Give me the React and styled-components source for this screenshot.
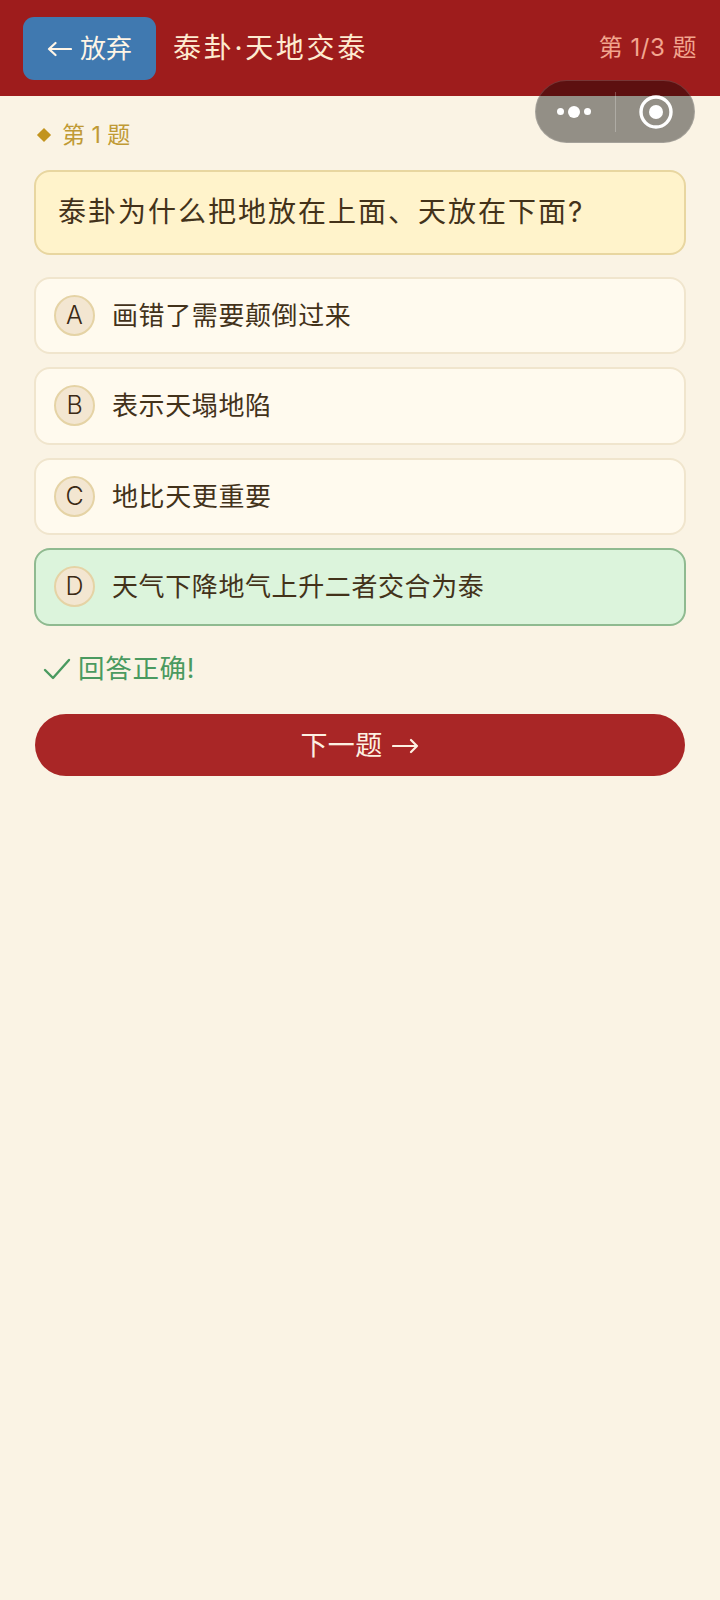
import React from "react";
import styled, { createGlobalStyle } from "styled-components";

const FONT = `Inter, "Noto Sans CJK SC", "Noto Sans", sans-serif`;
const Global = createGlobalStyle`
  html, body { margin: 0; padding: 0; background: #faf3e4; }
  body { font-family: ${FONT}; }
  * { box-sizing: border-box; }
`;
const Page = styled.div`position: relative; width: 720px; height: 1600px; background: #faf3e4; overflow: hidden;`;
const Header = styled.header`
  height: 96px; background: #9e1c1c; display: flex; align-items: center; padding: 0 23px 0 23px;
`;
const BackButton = styled.button`
  width: 133px; height: 63px; border: 0; border-radius: 11px; background: #4079b0;
  color: #fff5e6; display: flex; align-items: center; justify-content: center; gap: 8px;
  font: 400 26px/1 ${FONT}; padding: 2px 0 0;
`;
const Title = styled.h1`
  margin: 0 0 0 17px; flex: 1; color: #fdebd0; font-size: 28px; font-weight: 400; letter-spacing: 2.7px; line-height: 1;
`;
const Counter = styled.div`color: #f2a58f; font-size: 24px; font-weight: 400; white-space: pre; line-height: 1; letter-spacing: 0.5px;`;
const Content = styled.main`padding: 0 34px;`;
const Label = styled.div`
  height: 74px; display: flex; align-items: center; color: #c09a34; font-size: 23px; font-weight: 400; padding: 4px 0 0 5px; gap: 13px; white-space: pre; line-height: 1;
`;
const Diamond = styled.span`width: 10px; height: 10px; background: #c2941f; transform: rotate(45deg);`;
const Question = styled.div`
  height: 85px; background: #fff3cb; border: 2px solid #e8d6a0; border-radius: 16px; display: flex; align-items: center;
  padding: 0 22px 1px; font-size: 28px; font-weight: 400; color: #43321a; letter-spacing: 2px; line-height: 1;
`;
const Options = styled.div`margin-top: 21.5px; display: flex; flex-direction: column; gap: 13px;`;
const Option = styled.div`
  height: 77.5px; display: flex; align-items: center; gap: 17px; padding: 0 18px; border-radius: 16px;
  background: ${p => (p.$correct ? "#dcf4dc" : "#fffaee")};
  border: 2px solid ${p => (p.$correct ? "#8fba90" : "#f0e5cd")};
  font-size: 26px; font-weight: 400; color: #43321a; letter-spacing: 0.6px; line-height: 1;
`;
const OptionText = styled.span`display: block; padding-top: 1px;`;
const Badge = styled.span`
  width: 41px; height: 41px; flex: none; border-radius: 50%; background: #f3e6d1; border: 2px solid #e5d3a5;
  display: flex; align-items: center; justify-content: center; font-size: 25px; font-weight: 300; color: #3b2a15; letter-spacing: 0;
`;
const Status = styled.div`
  margin-top: 22px; height: 42px; display: flex; align-items: center; gap: 7px; padding-left: 9px; color: #4a9a60;
  font-size: 26.5px; font-weight: 400; letter-spacing: 0.7px; line-height: 1;
`;
const NextButton = styled.button`
  margin: 24px 0 0 1px; width: 650px; height: 62px; border: 0; border-radius: 31px; background: #a92626; color: #fdf0e2;
  display: flex; align-items: center; justify-content: center; gap: 10px; padding: 2px 0 0;
  font: 400 27px/1 ${FONT}; letter-spacing: 0.3px;
`;
const Capsule = styled.div`
  position: absolute; left: 535px; top: 80px; width: 160px; height: 63px; border-radius: 32px;
  background: rgba(0, 0, 0, 0.41); border: 1px solid rgba(255,255,255,0.16); display: flex; align-items: center;
`;
const CapsuleSide = styled.div`
  flex: 1; height: 100%; display: flex; align-items: center; justify-content: center; gap: 4px;
  padding: ${p => (p.$right ? "0 0 0 3px" : "0 3px 0 0")};
`;
const Divider = styled.div`width: 1px; height: 40px; background: rgba(255,255,255,0.25);`;
const Dot = styled.span`
  width: ${p => p.$size}px; height: ${p => p.$size}px; border-radius: 50%; background: #fff;
`;

const options = [
  ["A", "画错了需要颠倒过来"],
  ["B", "表示天塌地陷"],
  ["C", "地比天更重要"],
  ["D", "天气下降地气上升二者交合为泰", true],
];

export default function App() {
  return (
    <Page>
      <Global />
      <Header>
        <BackButton>
          <svg width="25" height="18" viewBox="0 0 25 18" fill="none" stroke="#fff5e6" strokeWidth="2.2" strokeLinecap="round" strokeLinejoin="round">
            <path d="M2 9h22M8.5 3L2 9l6.5 6" />
          </svg>
          放弃
        </BackButton>
        <Title>泰卦·天地交泰</Title>
        <Counter>第 1/3 题</Counter>
      </Header>
      <Content>
        <Label><Diamond />第 1 题</Label>
        <Question>泰卦为什么把地放在上面、天放在下面?</Question>
        <Options>
          {options.map(([k, t, c]) => (
            <Option key={k} $correct={c}><Badge>{k}</Badge><OptionText>{t}</OptionText></Option>
          ))}
        </Options>
        <Status>
          <svg width="28" height="24" viewBox="0 0 28 24" fill="none" stroke="#4a9a60" strokeWidth="2.4" strokeLinecap="round" strokeLinejoin="round">
            <path d="M2 13l8 8L26 3" />
          </svg>
          回答正确!
        </Status>
        <NextButton>
          下一题
          <svg width="27" height="18" viewBox="0 0 27 18" fill="none" stroke="#fdf0e2" strokeWidth="2.2" strokeLinecap="round" strokeLinejoin="round">
            <path d="M1 9h24M19 3l6 6-6 6" />
          </svg>
        </NextButton>
      </Content>
      <Capsule>
        <CapsuleSide><Dot $size={7} /><Dot $size={12} /><Dot $size={7} /></CapsuleSide>
        <Divider />
        <CapsuleSide $right>
          <svg width="34" height="34" viewBox="0 0 34 34">
            <circle cx="17" cy="17" r="15" fill="none" stroke="#fff" strokeWidth="3.4" />
            <circle cx="17" cy="17" r="7" fill="#fff" />
          </svg>
        </CapsuleSide>
      </Capsule>
    </Page>
  );
}
